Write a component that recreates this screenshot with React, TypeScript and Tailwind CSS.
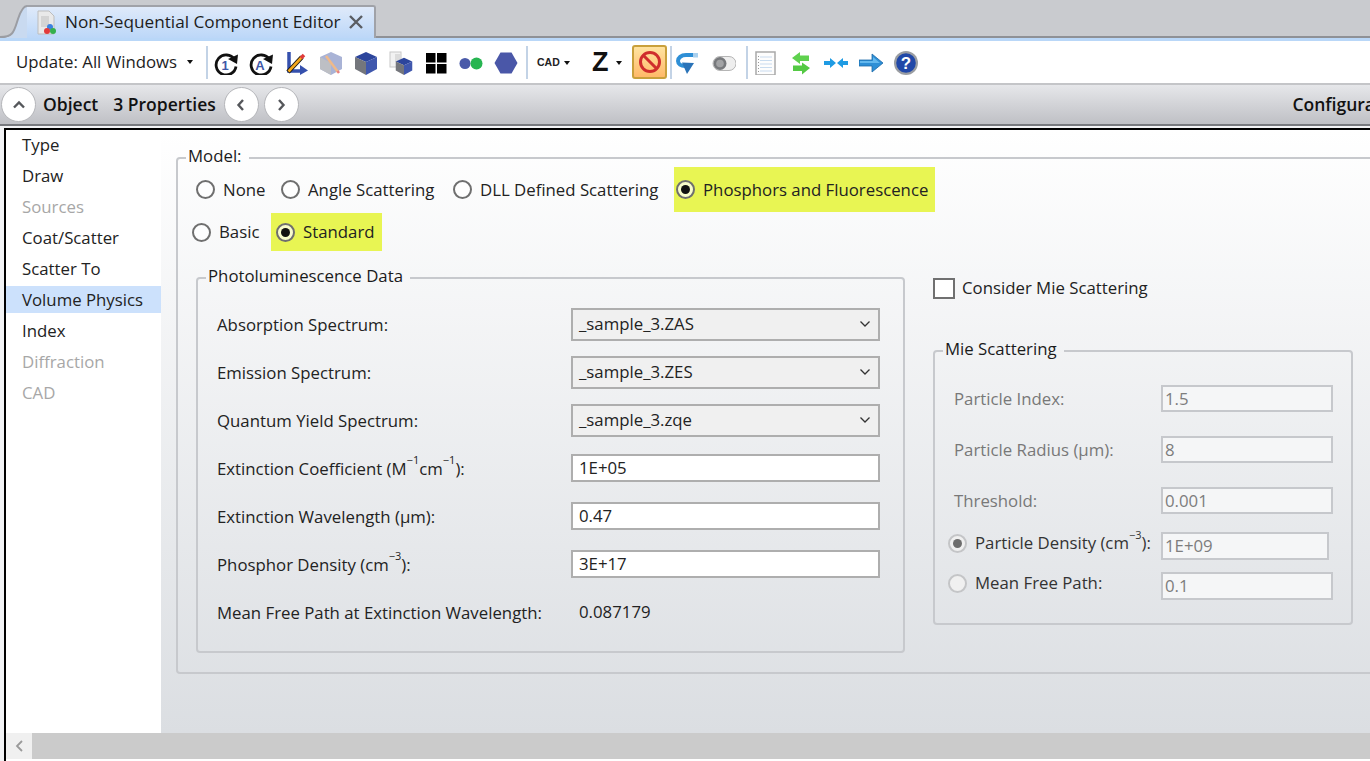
import React from "react";

const Cube = () => (
  <g>
    <path d="M12 1 23 6 12 11 1 6Z" fill="#2c459c" />
    <path d="M23 6V18L12 24V11Z" fill="#3f57ad" />
    <path d="M1 6V18L12 24V11Z" fill="#74767c" />
  </g>
);

const Svg = ({ children, w = 24, h = 24 }: { children: React.ReactNode; w?: number; h?: number }) => (
  <svg width={w} height={h} viewBox={`0 0 ${w} ${h}`}>{children}</svg>
);

const Refresh = ({ t }: { t: string }) => (
  <Svg>
    <path d="M20.500 8.500A10 10 0 1 0 22 15.500" fill="none" stroke="#111" strokeWidth="2.800" />
    <path d="M14 8 24 3.500 23 13Z" fill="#111" />
    <text x="11" y="18.500" textAnchor="middle" fontSize="13" fontWeight="700" fill="#4058a8" fontFamily="Liberation Sans">{t}</text>
  </Svg>
);

const Pencil = () => (
  <g>
    <path d="M4 21 18 6" stroke="#111" strokeWidth="4.500" />
    <path d="M4.500 20.500 18 6" stroke="#f5a81c" strokeWidth="2.600" />
    <path d="M17 7 20 4" stroke="#e03a3a" strokeWidth="3.500" />
  </g>
);

const tools: React.ReactNode[] = [
  <Refresh t="1" />,
  <Refresh t="A" />,
  <Svg>
    <path d="M5 1V20H17" fill="none" stroke="#3550ad" strokeWidth="3.500" />
    <path d="M16 14 24 19.500 16 24Z" fill="#3550ad" />
    <Pencil />
  </Svg>,
  <Svg>
    <path d="M12 1 23 6V18L12 24 1 18V6Z" fill="#a9b3d6" />
    <path d="M1 6 12 12V24L1 18Z" fill="#bdbfc4" />
    <path d="M7 5 19 21" stroke="#efb989" strokeWidth="2.500" />
    <path d="M18.500 20 20 22" stroke="#e87f7f" strokeWidth="2.500" />
  </Svg>,
  <Svg><Cube /></Svg>,
  <Svg>
    <rect x="1" y="1" width="11" height="15" fill="#f2f2f2" stroke="#c8c8c8" />
    <rect x="6" y="3" width="6" height="8" fill="#dcdcdc" />
    <g transform="translate(6 6) scale(.75)"><Cube /></g>
  </Svg>,
  <Svg>
    <rect x="2" y="2" width="9.500" height="9.500" fill="#000" />
    <rect x="13" y="2" width="9.500" height="9.500" fill="#000" />
    <rect x="2" y="13" width="9.500" height="9.500" fill="#000" />
    <rect x="13" y="13" width="9.500" height="9.500" fill="#000" />
  </Svg>,
  <Svg>
    <circle cx="6" cy="12.500" r="5.500" fill="#4a5aa9" />
    <circle cx="17.500" cy="12.500" r="6" fill="#27b551" />
  </Svg>,
  <Svg><path d="M6.500 1.500H17.500L23.500 12 17.500 22.500H6.500L.5 12Z" fill="#4a57a8" /></Svg>,
];

const tools2: React.ReactNode[] = [
  <Svg>
    <path d="M22 4H11C6 4 3 7 3 10S6 15 10 15" fill="none" stroke="#2e8fd6" strokeWidth="4" />
    <path d="M18 2H23V6.500H18Z" fill="#a9d0ee" />
    <path d="M7 11.500 19 12 12 23Z" fill="#2a73b8" />
  </Svg>,
  <Svg>
    <rect x="1" y="5.500" width="23" height="14" rx="7" fill="#eeeeee" stroke="#b5b5b5" />
    <circle cx="8" cy="12.500" r="6.500" fill="#77797c" />
    <circle cx="8" cy="12.500" r="3.800" fill="#a2a3a5" />
  </Svg>,
];

const tools3: React.ReactNode[] = [
  <Svg>
    <rect x="2" y="1" width="19" height="23" fill="#fdfdfd" stroke="#a9a9a9" strokeWidth="1.500" />
    <path d="M6 6H18M6 9.500H18M6 13H18M6 16.500H18M6 20H18" stroke="#c9dcef" strokeWidth="1.200" />
    <path d="M4.500 5V21" stroke="#999" strokeWidth="1" strokeDasharray="1 2" />
  </Svg>,
  <Svg>
    <path d="M3 7 11 1V4.500H20V10H11V13Z" fill="#5fd14e" />
    <path d="M21 17 13 11.500V14.500H4V20H13V23.500Z" fill="#54c944" />
  </Svg>,
  <Svg>
    <path d="M0 10H6V7L12 12 6 17V14H0Z" fill="#1f9be3" />
    <path d="M25 10H19V7L13 12 19 17V14H25Z" fill="#1f9be3" />
  </Svg>,
  <Svg>
    <path d="M0 9H13V3L24 12 13 21V15H0Z" fill="#2d8fd6" stroke="#1d6aa8" strokeWidth=".8" />
    <path d="M1 10H14V6L21 12H1Z" fill="#63b8ee" />
  </Svg>,
  <Svg>
    <circle cx="12" cy="12" r="12" fill="#9a9da2" />
    <circle cx="12" cy="12" r="9.800" fill="#2148a8" />
    <text x="12" y="18" textAnchor="middle" fontSize="17" fontWeight="700" fill="#fff" fontFamily="Liberation Sans">?</text>
  </Svg>,
];

const Sep = () => <div className="w-[2px] h-[33px] bg-[#c3d3e6]" />;
const Slot = ({ children }: { children: React.ReactNode }) => (
  <div className="w-[35px] flex justify-center items-center">{children}</div>
);
const Caret = () => <span className="w-0 h-0 border-x-[3.5px] border-x-transparent border-t-[4px] border-t-[#111]" />;

const RoundBtn = ({ d }: { d: string }) => (
  <div className="w-[35px] h-[35px] rounded-full bg-white border border-[#b5b6ba] flex items-center justify-center shrink-0">
    <svg width="14" height="14" viewBox="0 0 14 14">
      <path d={d} fill="none" stroke="#55575b" strokeWidth="2.400" />
    </svg>
  </div>
);

const Radio = ({ on = false, disabled = false }: { on?: boolean; disabled?: boolean }) => (
  <span className={`w-[19px] h-[19px] rounded-full border-2 flex items-center justify-center shrink-0 ${disabled ? "border-[#c4c5c7] bg-[#f0f0f0]" : "border-[#6f6f6f] bg-white/70"}`}>
    {on && <span className={`w-[9px] h-[9px] rounded-full ${disabled ? "bg-[#6d6d6d]" : "bg-[#111]"}`} />}
  </span>
);

const Legend = ({ children }: { children: React.ReactNode }) => (
  <legend className="ml-[8px] pl-[2px] pr-[7px] h-[21px] leading-[18px] text-[#1b1b1b]">{children}</legend>
);

const navItems = [
  ["Type", 0], ["Draw", 0], ["Sources", 1], ["Coat/Scatter", 0], ["Scatter To", 0],
  ["Volume Physics", 2], ["Index", 0], ["Diffraction", 1], ["CAD", 1],
] as const;

const Sup = ({ t }: { t: string }) => <sup className="text-[11px] leading-none align-[5px]">{t}</sup>;

const Select = ({ v }: { v: string }) => (
  <div className="w-[309px] h-[33px] border-2 border-[#aeaeae] bg-[#f0f0f0] flex items-center justify-between pl-[6px] pr-[8px]">
    <span>{v}</span>
    <svg width="10" height="6" viewBox="0 0 10 6"><path d="M.5.5 5 5 9.500.5" fill="none" stroke="#333" strokeWidth="1.300" /></svg>
  </div>
);
const Input = ({ v }: { v: string }) => (
  <div className="w-[309px] h-[28px] border-2 border-[#aeaeae] bg-white flex items-center pl-[6px]">{v}</div>
);
const PRow = ({ label, children }: { label: React.ReactNode; children: React.ReactNode }) => (
  <div className="h-[48px] flex items-center">
    <div className="w-[354px] pt-[1px] text-[#222] whitespace-nowrap">{label}</div>
    {children}
  </div>
);
const DInput = ({ v, w = "w-[172px]", h = "h-[27px]", low = false }: { v: string; w?: string; h?: string; low?: boolean }) => (
  <div className={`${w} ${h} border-2 border-[#c6c8cc] bg-[#f5f6f7] flex ${low ? "items-end" : "items-center"} pl-[2px] text-[#7d7d7d]`}>{v}</div>
);

export default function App() {
  return (
    <div className="w-[1370px] h-[761px] overflow-hidden flex flex-col bg-[#f2f3f5] font-['Open_Sans',sans-serif] text-[16.8px] text-[#222]">
      {/* Tab strip */}
      <div className="h-[38px] bg-[#c9cbcf] flex items-end shrink-0 border-b-[2px] border-[#8f9196]">
        <svg width="27" height="33" viewBox="0 0 27 33" className="-mb-[2px] shrink-0">
          <path d="M0 33C14 33 14 26 18 14 21 5 24 1 27 1V33Z" fill="#c9daf0" />
          <path d="M0 32C14 32 14 26 18 14 21 5 24 1 27 1" fill="none" stroke="#9b9da3" strokeWidth="2" />
        </svg>
        <div className="w-[349px] h-[33px] -mb-[2px] pb-[2px] border-t-2 border-r-2 border-[#a0a2a8] rounded-tr-[3px] bg-linear-to-b from-[#dfeafa] to-[#bcd7f8] flex items-center pl-[10px]">
          <svg width="20" height="25" viewBox="0 0 20 25" className="shrink-0 mt-[2px]">
            <path d="M1 1H12L17 6V24H1Z" fill="#e9e9e9" stroke="#bdbdbd" />
            <rect x="4" y="6" width="8" height="11" fill="#d4d4d4" />
            <circle cx="13" cy="17" r="3" fill="#3b82e0" />
            <circle cx="10" cy="21" r="3" fill="#e23b3b" />
            <circle cx="16" cy="21" r="3" fill="#35b04c" />
          </svg>
          <span className="ml-[8px] text-[17.2px] text-[#1d1d1d] whitespace-nowrap">Non-Sequential Component Editor</span>
          <svg width="14" height="14" viewBox="0 0 14 14" className="ml-[8px] shrink-0">
            <path d="M1 1 13 13M13 1 1 13" stroke="#5a5d62" strokeWidth="2.400" />
          </svg>
        </div>
      </div>
      <div className="h-[3px] bg-[#b9d7f8] shrink-0" />
      {/* Toolbar */}
      <div className="h-[42px] bg-white flex items-center shrink-0">
        <span className="ml-[16px] w-[171px] whitespace-nowrap text-[#1d1d1d]">Update: All Windows</span>
        <span className="w-[19px] flex"><Caret /></span>
        <Sep />
        <div className="flex mt-[1px]">{tools.map((t, i) => <Slot key={i}>{t}</Slot>)}</div>
        <div className="ml-[3px]"><Sep /></div>
        <div className="ml-[9px] mt-[1px] w-[37px] flex items-center gap-[4px]">
          <span className="text-[10.5px] font-bold font-['Liberation_Sans',sans-serif] text-[#222]">CAD</span>
          <Caret />
        </div>
        <div className="ml-[18px] mt-[1px] w-[40px] flex items-center gap-[7px]">
          <span className="text-[27px] leading-none font-bold font-['Liberation_Sans',sans-serif] text-[#111]">Z</span>
          <Caret />
        </div>
        <div className="w-[35px] h-[34px] rounded-[3px] border-2 border-[#c9a03c] bg-linear-to-b from-[#ffe3a0] to-[#ffb969] flex items-center justify-center">
          <svg width="24" height="24" viewBox="0 0 24 24">
            <circle cx="12" cy="12" r="9.500" fill="none" stroke="#cf2d2d" strokeWidth="3" />
            <path d="M5.500 5.500 18.500 18.500" stroke="#cf2d2d" strokeWidth="3" />
          </svg>
        </div>
        <div className="ml-[3px]"><Sep /></div>
        <div className="flex mt-[1px]">{tools2.map((t, i) => <div key={i} className={i === 0 ? "w-[30px] flex justify-center" : "w-[44px] flex justify-center"}>{t}</div>)}</div>
        <Sep />
        <div className="flex mt-[1px]">{tools3.map((t, i) => <Slot key={i}>{t}</Slot>)}</div>
      </div>
      {/* Object bar */}
      <div className="h-[43px] shrink-0 border-t-2 border-b-2 border-t-[#c4c5c8] border-b-[#77797e] bg-linear-to-b from-[#e6e7ea] to-[#bfc0c5] flex items-center pl-[1px] text-[17.5px] font-semibold text-[#111] whitespace-nowrap overflow-hidden">
        <RoundBtn d="M2 9.500 7 4.500 12 9.500" />
        <span className="ml-[7px] -mt-[1px]">Object</span>
        <span className="ml-[15px] -mt-[1px]">3 Properties</span>
        <span className="ml-[8px] flex gap-[5px]">
          <RoundBtn d="M9 2 4.500 7 9 12" />
          <RoundBtn d="M5 2 9.500 7 5 12" />
        </span>
        <span className="ml-auto -mr-[5px] -mt-[1px]">Configura</span>
      </div>
      {/* Main */}
      <div className="h-[635px] ml-[4px] mt-[2px] border-2 border-r-0 border-black flex flex-col bg-white shrink-0">
        <div className="flex h-[603px]">
          <nav className="w-[155px] shrink-0 bg-white">
            {navItems.map(([n, s]) => (
              <div key={n} className="h-[31px] pb-[2px] flex items-center">
                <span className={`w-full h-[27px] leading-[27px] pl-[16px] ${s === 1 ? "text-[#a7a7a7]" : "text-[#222]"} ${s === 2 ? "bg-[#cce1fc]" : ""}`}>{n}</span>
              </div>
            ))}
          </nav>
          <div className="flex-1 min-w-0 overflow-hidden pl-[15px] pt-[17px] bg-linear-to-b from-white to-[#dbdee2]">
            <fieldset className="w-[1300px] h-[527px] border-2 border-[#c7c9cd] rounded-[4px]">
              <Legend>Model:</Legend>
              <div className="-mt-[1px] h-[45px] flex items-center pl-[18px]">
                {([["None", 85], ["Angle Scattering", 172], ["DLL Defined Scattering", 221]] as const).map(([t, w]) => (
                  <div key={t} className="flex items-center gap-[8px] shrink-0" style={{ width: w }}>
                    <Radio /><span className="whitespace-nowrap">{t}</span>
                  </div>
                ))}
                <div className="h-[45px] w-[261px] bg-[#e8f553] flex items-center gap-[8px] pl-[2px]">
                  <Radio on /><span className="whitespace-nowrap">Phosphors and Fluorescence</span>
                </div>
              </div>
              <div className="h-[38px] mt-[1px] flex items-center pl-[14px]">
                <div className="w-[79px] flex items-center gap-[8px]"><Radio /><span>Basic</span></div>
                <div className="w-[111px] h-[38px] bg-[#e8f553] flex items-center gap-[8px] pl-[5px]"><Radio on /><span>Standard</span></div>
              </div>
              <div className="mt-[16px] ml-[18px] flex items-start">
                <fieldset className="w-[709px] h-[386px] border-2 border-[#c7c9cd] rounded-[4px] shrink-0">
                  <Legend>Photoluminescence Data</Legend>
                  <div className="pl-[19px] pt-[12px]">
                    <PRow label="Absorption Spectrum:"><Select v="_sample_3.ZAS" /></PRow>
                    <PRow label="Emission Spectrum:"><Select v="_sample_3.ZES" /></PRow>
                    <PRow label="Quantum Yield Spectrum:"><Select v="_sample_3.zqe" /></PRow>
                    <PRow label={<>Extinction Coefficient (M<Sup t="−1" />cm<Sup t="−1" />):</>}><Input v="1E+05" /></PRow>
                    <PRow label="Extinction Wavelength (µm):"><Input v="0.47" /></PRow>
                    <PRow label={<>Phosphor Density (cm<Sup t="−3" />):</>}><Input v="3E+17" /></PRow>
                    <PRow label="Mean Free Path at Extinction Wavelength:"><span className="ml-[8px]">0.087179</span></PRow>
                  </div>
                </fieldset>
                <div className="ml-[28px] w-[421px] shrink-0">
                  <div className="mt-[10px] h-[22px] flex items-center gap-[7px]">
                    <span className="w-[22px] h-[21px] border-2 border-[#707070] bg-white shrink-0" />
                    <span>Consider Mie Scattering</span>
                  </div>
                  <fieldset className="mt-[41px] w-[420px] h-[285px] border-2 border-[#c7c9cd] rounded-[4px]">
                    <Legend>Mie Scattering</Legend>
                    <div className="pl-[19px] pt-[24px]">
                      <div className="h-[27px] flex items-center"><span className="w-[207px] text-[#787878]">Particle Index:</span><DInput v="1.5" /></div>
                      <div className="mt-[24px] h-[27px] flex items-center"><span className="w-[207px] text-[#787878]">Particle Radius (µm):</span><DInput v="8" /></div>
                      <div className="mt-[24px] h-[27px] flex items-center"><span className="w-[207px] text-[#787878]">Threshold:</span><DInput v="0.001" /></div>
                      <div className="mt-[18px] h-[28px] flex items-center -ml-[6px]">
                        <span className="w-[213px] flex items-center gap-[8px] -mt-[6px] text-[#333]"><Radio on disabled /><span className="whitespace-nowrap">Particle Density (cm<Sup t="−3" />):</span></span>
                        <DInput v="1E+09" w="w-[168px]" h="h-[28px]" low />
                      </div>
                      <div className="mt-[12px] h-[28px] flex items-center -ml-[6px]">
                        <span className="w-[213px] flex items-center gap-[8px] -mt-[6px] text-[#333]"><Radio disabled /><span>Mean Free Path:</span></span>
                        <DInput v="0.1" h="h-[28px]" low />
                      </div>
                    </div>
                  </fieldset>
                </div>
              </div>
            </fieldset>
          </div>
        </div>
        <div className="h-[26px] bg-[#cbcbcb] flex shrink-0">
          <div className="w-[26px] h-full bg-[#f0f0f0] flex items-center justify-center">
            <svg width="9" height="12" viewBox="0 0 9 12"><path d="M7 1 2 6 7 11" fill="none" stroke="#9a9a9a" strokeWidth="1.800" /></svg>
          </div>
        </div>
      </div>
    </div>
  );
}
